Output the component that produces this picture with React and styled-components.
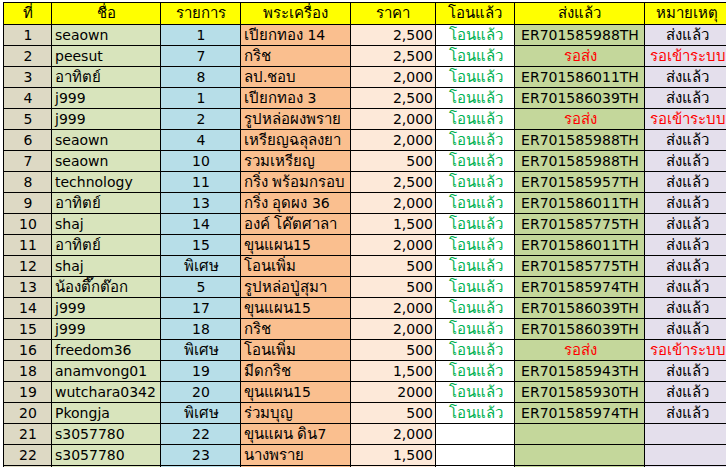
import styled, { createGlobalStyle } from 'styled-components';

const GlobalStyle = createGlobalStyle`
    html, body {
        margin: 0;
        background: #ffffff;
    }
    body {
        font-family: "DejaVu Sans", "Noto Sans", sans-serif;
        overflow: hidden;
    }
`

const Sheet = styled.div`
    width: 726px;
    height: 467px;
    overflow: hidden;
    padding: 2px 0 0 3px;
    box-sizing: border-box;
`

const Table = styled.table`
    border-collapse: collapse;
    table-layout: fixed;
    width: 726px;
    font-size: 14px;
    line-height: 1;
`

const colors = {
    no: '#ddd9c4',
    name: '#d8e4bc',
    list: '#b7dee8',
    item: '#fabf8f',
    price: '#fde9d9',
    paid: '#ffffff',
    ship: '#c4d79b',
    note: '#e4dfec',
}

const aligns = {
    no: 'center',
    name: 'left',
    list: 'center',
    item: 'left',
    price: 'right',
    paid: 'center',
    ship: 'center',
    note: 'center',
}

const Head = styled.th`
    background: #ffff00;
    border: 1px solid #000;
    height: 21px;
    padding: 0;
    font-weight: normal;
    font-size: 15px;
    text-align: center;
    color: #000;
    white-space: nowrap;
`

const Cell = styled.td`
    background: ${p => colors[p.$kind]};
    border: 1px solid #000;
    height: 20px;
    padding: 0 2px 0 3px;
    font-size: 14px;
    text-align: ${p => aligns[p.$kind]};
    color: ${p => p.$tone === 'red' ? '#ff0000' : p.$tone === 'green' ? '#00b050' : '#000'};
    white-space: nowrap;
    overflow: hidden;
`

// Thai glyphs come out small in the fallback font, so they get a size of their own
const ThaiRun = styled.span`
    font-size: 15px;
`

const widths = [48, 109, 80, 110, 85, 79, 130, 85]
const heads = ['ที่', 'ชื่อ', 'รายการ', 'พระเครื่อง', 'ราคา', 'โอนแล้ว', 'ส่งแล้ว', 'หมายเหตุ']

const rows = [
    ['1', 'seaown', '1', 'เปียกทอง 14', '2,500', 'โอนแล้ว', 'ER701585988TH', 'ส่งแล้ว'],
    ['2', 'peesut', '7', 'กริช', '2,500', 'โอนแล้ว', 'รอส่ง', 'รอเข้าระบบ'],
    ['3', 'อาทิตย์', '8', 'ลป.ชอบ', '2,000', 'โอนแล้ว', 'ER701586011TH', 'ส่งแล้ว'],
    ['4', 'j999', '1', 'เปียกทอง 3', '2,500', 'โอนแล้ว', 'ER701586039TH', 'ส่งแล้ว'],
    ['5', 'j999', '2', 'รูปหล่อผงพราย', '2,000', 'โอนแล้ว', 'รอส่ง', 'รอเข้าระบบ'],
    ['6', 'seaown', '4', 'เหรียญฉลุลงยา', '2,000', 'โอนแล้ว', 'ER701585988TH', 'ส่งแล้ว'],
    ['7', 'seaown', '10', 'รวมเหรียญ', '500', 'โอนแล้ว', 'ER701585988TH', 'ส่งแล้ว'],
    ['8', 'technology', '11', 'กริ่ง พร้อมกรอบ', '2,500', 'โอนแล้ว', 'ER701585957TH', 'ส่งแล้ว'],
    ['9', 'อาทิตย์', '13', 'กริ่ง อุดผง 36', '2,000', 'โอนแล้ว', 'ER701586011TH', 'ส่งแล้ว'],
    ['10', 'shaj', '14', 'องค์ โค๊ตศาลา', '1,500', 'โอนแล้ว', 'ER701585775TH', 'ส่งแล้ว'],
    ['11', 'อาทิตย์', '15', 'ขุนแผน15', '2,000', 'โอนแล้ว', 'ER701586011TH', 'ส่งแล้ว'],
    ['12', 'shaj', 'พิเศษ', 'โอนเพิ่ม', '500', 'โอนแล้ว', 'ER701585775TH', 'ส่งแล้ว'],
    ['13', 'น้องตึ๊กต๊อก', '5', 'รูปหล่อปู่สุมา', '500', 'โอนแล้ว', 'ER701585974TH', 'ส่งแล้ว'],
    ['14', 'j999', '17', 'ขุนแผน15', '2,000', 'โอนแล้ว', 'ER701586039TH', 'ส่งแล้ว'],
    ['15', 'j999', '18', 'กริช', '2,000', 'โอนแล้ว', 'ER701586039TH', 'ส่งแล้ว'],
    ['16', 'freedom36', 'พิเศษ', 'โอนเพิ่ม', '500', 'โอนแล้ว', 'รอส่ง', 'รอเข้าระบบ'],
    ['18', 'anamvong01', '19', 'มีดกริช', '1,500', 'โอนแล้ว', 'ER701585943TH', 'ส่งแล้ว'],
    ['19', 'wutchara0342', '20', 'ขุนแผน15', '2000', 'โอนแล้ว', 'ER701585930TH', 'ส่งแล้ว'],
    ['20', 'Pkongja', 'พิเศษ', 'ร่วมบุญ', '500', 'โอนแล้ว', 'ER701585974TH', 'ส่งแล้ว'],
    ['21', 's3057780', '22', 'ขุนแผน ดิน7', '2,000', '', '', ''],
    ['22', 's3057780', '23', 'นางพราย', '1,500', '', '', ''],
    ['', '', '', '', '', '', '', ''],
]

const kinds = ['no', 'name', 'list', 'item', 'price', 'paid', 'ship', 'note']
const thaiRun = /([\u0E00-\u0E7F]+)/
const thaiOnly = /^[\u0E00-\u0E7F]+$/

function toneOf(kind, value) {
    if (kind === 'paid') return 'green'
    if (value === 'รอส่ง' || value === 'รอเข้าระบบ') return 'red'
    return 'black'
}

function Runs({ text }) {
    return text.split(thaiRun).filter(Boolean).map((part, i) =>
        thaiOnly.test(part) ? <ThaiRun key={i}>{part}</ThaiRun> : <span key={i}>{part}</span>
    )
}

export default function App() {
    return (
        <Sheet>
            <GlobalStyle />
            <Table>
                <colgroup>
                    {widths.map((w, i) => <col key={i} style={{ width: w }} />)}
                </colgroup>
                <thead>
                    <tr>
                        {heads.map(h => <Head key={h}>{h}</Head>)}
                    </tr>
                </thead>
                <tbody>
                    {rows.map((row, r) => (
                        <tr key={r}>
                            {row.map((value, c) => (
                                <Cell key={c} $kind={kinds[c]} $tone={toneOf(kinds[c], value)}>
                                    <Runs text={value} />
                                </Cell>
                            ))}
                        </tr>
                    ))}
                </tbody>
            </Table>
        </Sheet>
    )
}
